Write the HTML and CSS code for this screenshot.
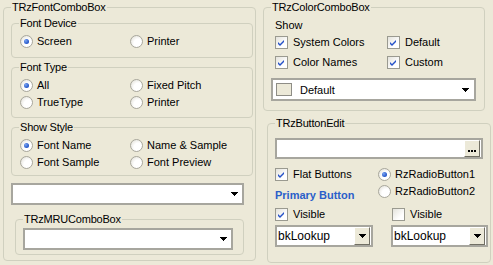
FILE: index.html
```html
<!DOCTYPE html>
<html lang="en">
<head>
  <meta charset="UTF-8">
  <title>TRz Combo Boxes</title>
  <link rel="stylesheet" href="styles.css">
</head>
<body>
  <div class="form">
    <!-- Font combo box settings -->
    <fieldset class="group font-group">
      <legend>TRzFontComboBox</legend>

      <fieldset class="group sub">
        <legend>Font Device</legend>
        <div class="options">
          <label class="opt"><span class="radio on"></span>Screen</label>
          <label class="opt"><span class="radio"></span>Printer</label>
        </div>
      </fieldset>

      <fieldset class="group sub">
        <legend>Font Type</legend>
        <div class="options">
          <label class="opt"><span class="radio on"></span>All</label>
          <label class="opt"><span class="radio"></span>Fixed Pitch</label>
          <label class="opt"><span class="radio"></span>TrueType</label>
          <label class="opt"><span class="radio"></span>Printer</label>
        </div>
      </fieldset>

      <fieldset class="group sub">
        <legend>Show Style</legend>
        <div class="options">
          <label class="opt"><span class="radio on"></span>Font Name</label>
          <label class="opt"><span class="radio"></span>Name &amp; Sample</label>
          <label class="opt"><span class="radio"></span>Font Sample</label>
          <label class="opt"><span class="radio"></span>Font Preview</label>
        </div>
      </fieldset>

      <div class="combo font-combo">
        <svg class="arrow" width="7" height="4" viewBox="0 0 7 4"><path d="M0 0h7v1h-1v1h-1v1h-1v1h-1v-1h-1v-1h-1v-1h-1z"/></svg>
      </div>

      <fieldset class="group mru">
        <legend>TRzMRUComboBox</legend>
        <div class="combo mru-combo">
          <svg class="arrow" width="7" height="4" viewBox="0 0 7 4"><path d="M0 0h7v1h-1v1h-1v1h-1v1h-1v-1h-1v-1h-1v-1h-1z"/></svg>
        </div>
      </fieldset>
    </fieldset>

    <div class="right">
      <!-- Color combo box settings -->
      <fieldset class="group color-group">
        <legend>TRzColorComboBox</legend>
        <div class="show-label">Show</div>
        <div class="checks">
          <label class="opt chk"><span class="check on"><svg width="9" height="9" viewBox="0 0 9 9"><path d="M1 4l2 2 4-4v2l-4 4-2-2z"/></svg></span>System Colors</label>
          <label class="opt chk"><span class="check on"><svg width="9" height="9" viewBox="0 0 9 9"><path d="M1 4l2 2 4-4v2l-4 4-2-2z"/></svg></span>Default</label>
          <label class="opt chk"><span class="check on"><svg width="9" height="9" viewBox="0 0 9 9"><path d="M1 4l2 2 4-4v2l-4 4-2-2z"/></svg></span>Color Names</label>
          <label class="opt chk"><span class="check on"><svg width="9" height="9" viewBox="0 0 9 9"><path d="M1 4l2 2 4-4v2l-4 4-2-2z"/></svg></span>Custom</label>
        </div>
        <div class="combo color-combo">
          <span class="swatch"></span>
          <span class="combo-text">Default</span>
          <svg class="arrow" width="7" height="4" viewBox="0 0 7 4"><path d="M0 0h7v1h-1v1h-1v1h-1v1h-1v-1h-1v-1h-1v-1h-1z"/></svg>
        </div>
      </fieldset>

      <!-- Button edit settings -->
      <fieldset class="group edit-group">
        <legend>TRzButtonEdit</legend>
        <div class="button-edit">
          <span class="ellipsis-btn"><i></i><i></i><i></i></span>
        </div>

        <div class="edit-top">
          <div class="edit-left">
            <label class="opt chk"><span class="check on"><svg width="9" height="9" viewBox="0 0 9 9"><path d="M1 4l2 2 4-4v2l-4 4-2-2z"/></svg></span>Flat Buttons</label>
            <div class="primary">Primary Button</div>
          </div>
          <div class="edit-radios">
            <label class="opt"><span class="radio on"></span>RzRadioButton1</label>
            <label class="opt"><span class="radio"></span>RzRadioButton2</label>
          </div>
        </div>

        <div class="edit-grid">
          <label class="opt chk"><span class="check on"><svg width="9" height="9" viewBox="0 0 9 9"><path d="M1 4l2 2 4-4v2l-4 4-2-2z"/></svg></span>Visible</label>
          <label class="opt chk second"><span class="check"></span>Visible</label>
          <div class="combo kind-combo">
            <span class="combo-text">bkLookup</span>
            <span class="drop-btn"><svg width="7" height="4" viewBox="0 0 7 4"><path d="M0 0h7v1h-1v1h-1v1h-1v1h-1v-1h-1v-1h-1v-1h-1z"/></svg></span>
          </div>
          <div class="combo kind-combo narrow">
            <span class="combo-text">bkLookup</span>
            <span class="drop-btn"><svg width="7" height="4" viewBox="0 0 7 4"><path d="M0 0h7v1h-1v1h-1v1h-1v1h-1v-1h-1v-1h-1v-1h-1z"/></svg></span>
          </div>
        </div>
      </fieldset>
    </div>
  </div>
</body>
</html>
```

FILE: styles.css
```css
body {
  margin: 0;
  background-color: #ece9d8; /* XP dialog face */
  font-family: "Liberation Sans", Arial, sans-serif;
  font-size: 11px;
  color: #000;
}

.form {
  display: flex;
  align-items: flex-start;
  padding: 1px 0 0 3px;
}

/* Group boxes */
.group {
  margin: 0;
  padding: 0;
  min-width: 0;
  box-sizing: border-box;
  border: 1px solid #d0d0bf;
  border-radius: 4px;
}

.group legend {
  padding: 0 1px;
  line-height: 13px;
  letter-spacing: -0.2px;
}

.font-group {
  width: 253px;
  height: 260px;
  padding: 3px 2px 0 7px;
}

.sub {
  padding: 5px 0 9px 8px;
}

.sub legend {
  margin-left: -1px;
}

.sub + .sub {
  margin-top: 3px;
}

.sub:nth-of-type(2) {
  padding-bottom: 8px;
}

.sub:nth-of-type(3) {
  padding-bottom: 6px;
}

.options {
  display: grid;
  grid-template-columns: 110px auto;
  row-gap: 4px;
}

.opt {
  display: flex;
  align-items: center;
  gap: 4px;
  height: 13px;
  line-height: 13px;
  white-space: nowrap;
}

.opt.chk {
  gap: 5px;
}

/* Radio buttons */
.radio {
  width: 11px;
  height: 11px;
  flex: none;
  border: 1px solid #a8a79c;
  border-radius: 50%;
  background: radial-gradient(circle at 65% 65%, #ffffff 40%, #dcdad0);
  display: flex;
  align-items: center;
  justify-content: center;
}

.radio.on::after {
  content: "";
  width: 5px;
  height: 5px;
  border-radius: 50%;
  background: radial-gradient(circle at 35% 35%, #79a4f2, #2153c7 70%);
}

/* Check boxes */
.check {
  width: 11px;
  height: 11px;
  flex: none;
  border: 1px solid #9a9a90;
  background: linear-gradient(135deg, #e4e3dc, #ffffff 70%);
  display: flex;
  align-items: center;
  justify-content: center;
}

.check svg {
  fill: #2451c8;
}

/* Combo boxes */
.combo {
  height: 22px;
  box-sizing: border-box;
  border: 2px solid #a7a69e;
  background-color: #fff;
  display: flex;
  align-items: center;
  justify-content: flex-end;
}

.arrow {
  margin-right: 4px;
  shape-rendering: crispEdges;
}

.font-combo {
  width: 233px;
  margin-top: 7px;
}

.mru {
  width: 229px;
  margin: 8px 0 0 4px;
  padding: 2px 0 4px 7px;
}

.mru-combo {
  width: 210px;
}

/* Right column */
.right {
  display: flex;
  flex-direction: column;
  align-items: flex-start;
  margin-left: 7px;
}

.color-group {
  width: 222px;
  height: 110px;
  padding: 5px 0 0 7px;
}

.show-label {
  margin-left: 4px;
  line-height: 13px;
}

.checks {
  display: grid;
  grid-template-columns: 112px auto;
  row-gap: 7px;
  margin: 4px 0 0 4px;
}

.color-combo {
  width: 205px;
  height: 23px;
  margin-top: 9px;
  justify-content: flex-start;
}

.swatch {
  width: 14px;
  height: 11px;
  margin-left: 3px;
  border: 1px solid #8e8d86;
  background-color: #ece9d8;
}

.combo-text {
  flex: 1;
  padding-left: 8px;
}

.color-combo .arrow {
  margin-right: 5px;
}

.edit-group {
  width: 224px;
  height: 146px;
  margin: 6px 0 0 4px;
  padding: 8px 0 0 7px;
}

.button-edit {
  width: 208px;
  height: 21px;
  box-sizing: border-box;
  border: 2px solid #a7a69e;
  background-color: #fff;
  display: flex;
  justify-content: flex-end;
  padding-right: 1px;
}

.ellipsis-btn,
.drop-btn {
  width: 16px;
  box-sizing: border-box;
  background-color: #ece9d8;
  border: 1px solid;
  border-color: #ffffff #716f64 #716f64 #ffffff;
  display: flex;
  align-items: center;
  justify-content: center;
  gap: 1px;
}

.ellipsis-btn i {
  width: 2px;
  height: 2px;
  margin-top: 4px;
  background-color: #000;
}

.edit-top {
  display: flex;
  margin-top: 9px;
}

.edit-left {
  width: 103px;
}

.primary {
  margin-top: 8px;
  line-height: 13px;
  font-weight: bold;
  color: #2a5fca;
}

.edit-radios {
  display: flex;
  flex-direction: column;
  gap: 4px;
}

.edit-grid {
  display: grid;
  grid-template-columns: 116px 97px;
  row-gap: 4px;
  margin-top: 6px;
}

.second {
  margin-left: 1px;
}

.kind-combo {
  width: 98px;
  padding-right: 1px;
}

.kind-combo.narrow {
  width: 97px;
}

.kind-combo .combo-text {
  padding-left: 1px;
  font-size: 12px;
}

.drop-btn {
  height: 18px;
}

.drop-btn svg {
  shape-rendering: crispEdges;
}
```
